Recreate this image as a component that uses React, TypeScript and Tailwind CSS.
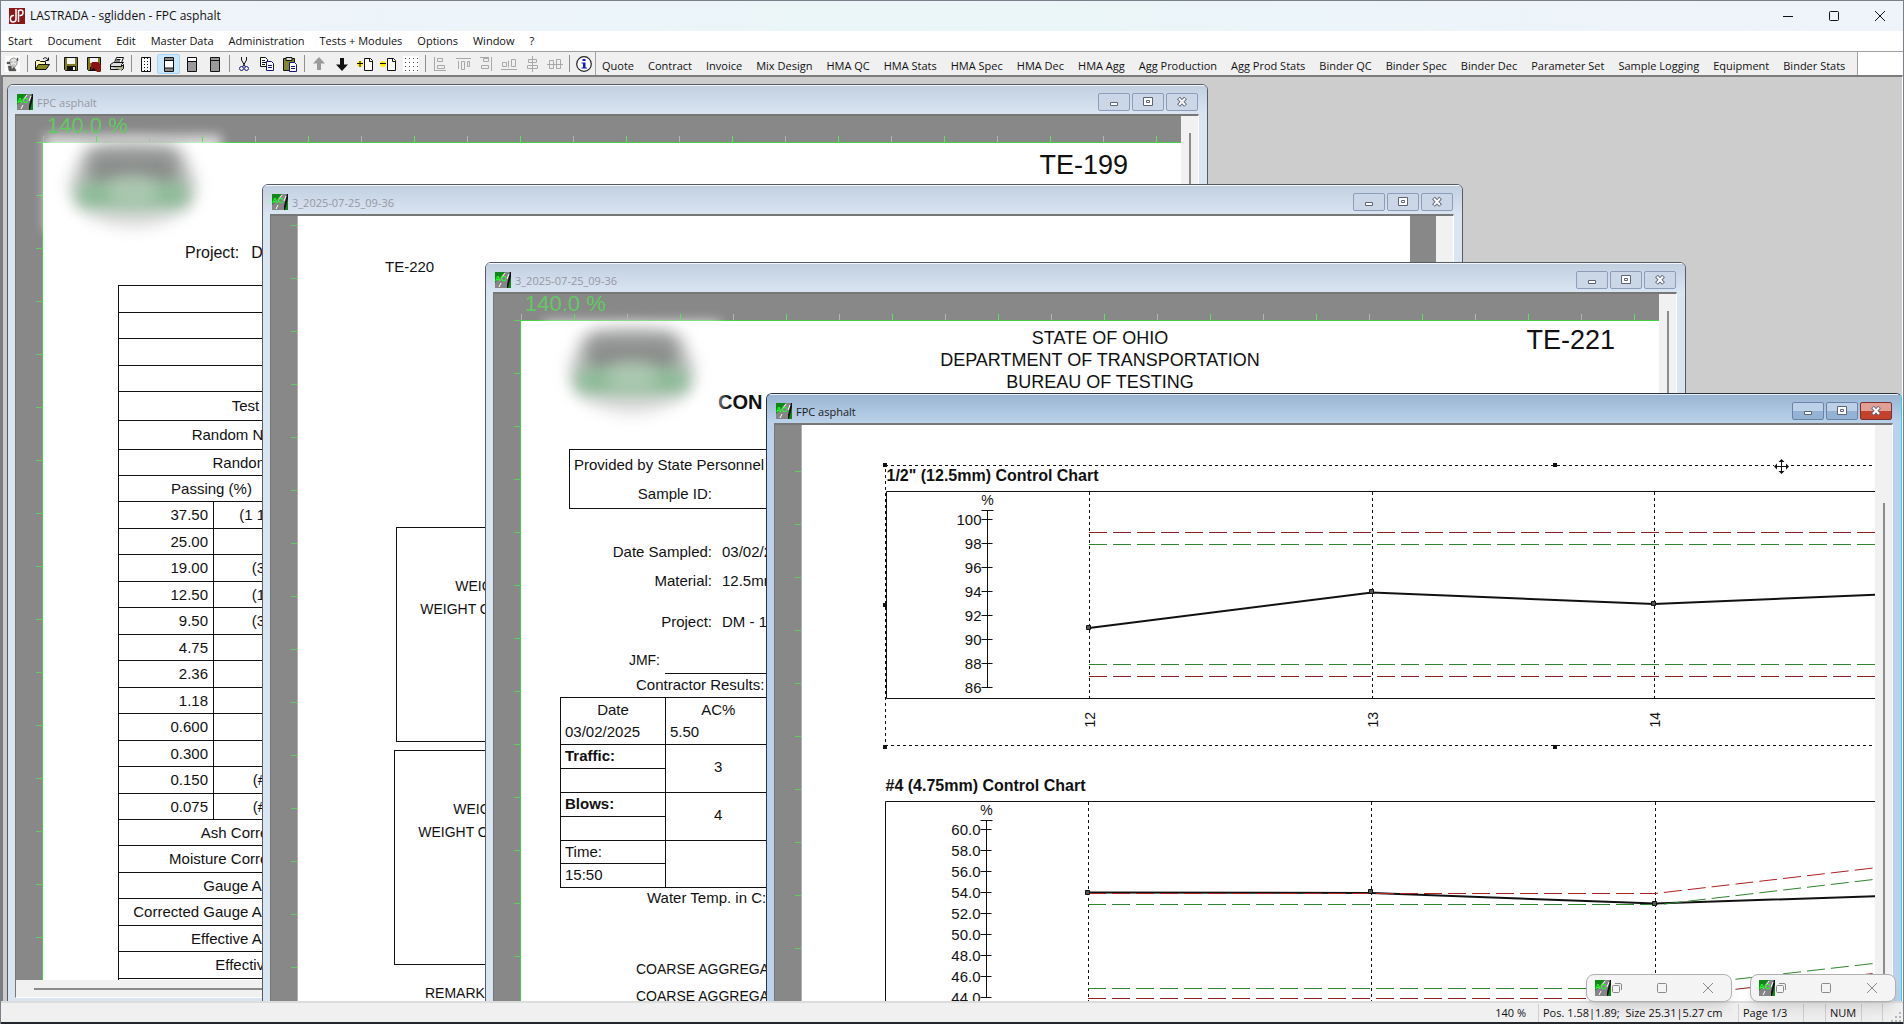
import * as React from "react";

interface WindowProps {
  title: string;
  place: string;
  active?: boolean;
  thumb?: string;
  hScroll?: boolean;
  children: React.ReactNode;
}
interface Series {
  color: string;
  points: string;
  dash?: string;
  width: number;
}
interface ChartProps {
  title: string;
  left: number;
  labels: string[];
  firstTick: number;
  step: number;
  boxBottom: number;
  columns: number[];
  names: string[];
  series: Series[];
  markers: number[][];
  selected?: boolean;
}

const menus = [
  "Start",
  "Document",
  "Edit",
  "Master Data",
  "Administration",
  "Tests + Modules",
  "Options",
  "Window",
  "?",
];
const modules = [
  "Quote",
  "Contract",
  "Invoice",
  "Mix Design",
  "HMA QC",
  "HMA Stats",
  "HMA Spec",
  "HMA Dec",
  "HMA Agg",
  "Agg Production",
  "Agg Prod Stats",
  "Binder QC",
  "Binder Spec",
  "Binder Dec",
  "Parameter Set",
  "Sample Logging",
  "Equipment",
  "Binder Stats",
];
const sieves = [
  ["37.50", '(1 1/2")'],
  ["25.00", ""],
  ["19.00", '(3/4")'],
  ["12.50", '(1/2")'],
  ["9.50", '(3/8")'],
  ["4.75", ""],
  ["2.36", ""],
  ["1.18", ""],
  ["0.600", ""],
  ["0.300", ""],
  ["0.150", "(#100)"],
  ["0.075", "(#200)"],
];
const results = [
  "Ash Correction",
  "Moisture Correction",
  "Gauge AC (%)",
  "Corrected Gauge AC (%)",
  "Effective AC (%)",
  "Effective (%)",
  "",
];

/* ---------- toolbar icons ---------- */

const pageShape = <path d="M3.5 1.5h9v14h-9z" fill="#fff" stroke="#111" />;

const icons: Record<string, React.ReactNode> = {
  User: (
    <>
      <path d="M0 0h15v16H0z" fill="#fff" />
      <path d="M5 4q4-4 7 0v4l-2 3H7L5 8z" fill="#e4e4e4" stroke="#999" />
      <path d="M2 6h3v2H2zM3 10h3l1 3 2-2 2 3v1H4zM6 6h2M9 6h2M7 9h3M12 2h1v3h-1z" fill="#555" stroke="#555" strokeWidth=".4" />
    </>
  ),
  Open: (
    <>
      <path d="M1.500 13.500v-8l1-1h3l1 1h5v3" fill="#fffbb0" stroke="#111" />
      <path d="M1.500 13.500l3-5h11l-3.500 5z" fill="#8a8a20" stroke="#111" />
      <path d="M9 3q3-3 5 1M14.500 1.500v3h-3" fill="none" stroke="#111" />
    </>
  ),
  Save: (
    <>
      <path d="M1.500 1.500h13v13h-12l-1-1z" fill="#7d7d20" stroke="#111" />
      <path d="M4 2h8v6H4z" fill="#f4f4f4" />
      <path d="M4 10h9v5H4z" fill="#111" />
      <path d="M10 11h2v3h-2z" fill="#eee" />
    </>
  ),
  "Save and close": (
    <>
      <path d="M1.500 1.500h13v13h-12l-1-1z" fill="#7d7d20" stroke="#111" />
      <path d="M4 2h8v5H4z" fill="#f4f4f4" />
      <path d="M4 11h9v4H4z" fill="#111" />
      <path d="M6 6h6l3 3v4h-2l2 3h-4L8 12l-3 2V9z" fill="#8f1212" />
    </>
  ),
  Print: (
    <>
      <path d="M5.500 6.500l2-5h7l-2 5" fill="#fff" stroke="#111" />
      <path d="M7.500 3.500h4M7 5h4" stroke="#111" />
      <path d="M1.500 8.500l3-2h10l-2 2v5h-11z" fill="#ddd" stroke="#111" />
      <path d="M1.500 10.500h11l2-2v4l-2 2" fill="#aaa" stroke="#111" />
      <path d="M9 12h2" stroke="#dd2" />
    </>
  ),
  "Page rulers": (
    <>
      {pageShape}
      <path d="M6.500 2v13M9.500 2v13" stroke="#111" strokeDasharray="1 2" />
    </>
  ),
  "Header and footer": (
    <>
      {pageShape}
      <path d="M4 2h8v2.500H4zM4 12h8v3H4z" fill="#888" />
      <path d="M3.500 4.500h9M3.500 12h9" stroke="#111" />
    </>
  ),
  Body: (
    <>
      {pageShape}
      <path d="M4 6h8v9H4z" fill="#999" />
      <path d="M3.500 5.500h9" stroke="#111" />
    </>
  ),
  "Full page": (
    <>
      {pageShape}
      <path d="M4 2h8v13H4z" fill="#999" />
      <path d="M3.500 4.500h9" stroke="#111" />
    </>
  ),
  Cut: (
    <>
      <path d="M5.500 1v3l4 7M10.500 1v3l-4 7" fill="none" stroke="#111" />
      <circle cx="5.500" cy="12.500" r="2" fill="none" stroke="#1a1a9a" />
      <circle cx="10.500" cy="12.500" r="2" fill="none" stroke="#1a1a9a" />
    </>
  ),
  Copy: (
    <>
      <path d="M1.500 1.500h5l2 2v7h-7z" fill="#fff" stroke="#111" />
      <path d="M3 4.500h3M3 6.500h4M3 8.500h3" stroke="#111" />
      <path d="M7.500 5.500h5l2 2v7h-7z" fill="#fff" stroke="#14147a" />
      <path d="M9 9.500h4M9 11.500h4" stroke="#14147a" />
    </>
  ),
  Paste: (
    <>
      <path d="M1.500 2.500h11v12h-11z" fill="#85852a" stroke="#111" />
      <path d="M4 1.500h6v3H4z" fill="#ddd" stroke="#111" />
      <path d="M7.500 6.500h5l2 2v7h-7z" fill="#fff" stroke="#14147a" />
      <path d="M9 10.500h4M9 12.500h4" stroke="#14147a" />
    </>
  ),
  "Move up": <path d="M8 1l6 6.500h-4V14H6V7.500H2z" fill="#9a9a9a" />,
  "Move down": <path d="M8 15l6-6.500h-4V2H6v6.500H2z" fill="#111" />,
  "Add page": (
    <>
      <circle cx="3" cy="8" r="3" fill="#ffee00" />
      <path d="M0 7.500h6M3 5v6" stroke="#111" />
      <path d="M7.500 2.500h6l2 2v10h-8z" fill="#fff" stroke="#111" />
      <path d="M12.500 2.500v3h3" fill="none" stroke="#111" />
    </>
  ),
  "Remove page": (
    <>
      <circle cx="3" cy="8" r="3" fill="#ffee00" />
      <path d="M0 7.500h6" stroke="#111" />
      <path d="M7.500 2.500h6l2 2v10h-8z" fill="#fff" stroke="#111" />
      <path d="M12.500 2.500v3h3" fill="none" stroke="#111" />
    </>
  ),
  Grid: (
    <>
      <path d="M0 0h16v16H0z" fill="#fff" />
      <path d="M2 2.500h13M2 6.500h13M2 10.500h13M2 14.500h13" stroke="#444" strokeDasharray="1 3" />
    </>
  ),
  "Align left": <path d="M2.500 1v14M5.500 2.500h5v3h-5zM5.500 9.500h7v3h-7zM3 14.500h11" fill="none" stroke="#a8a8a8" />,
  "Align top": <path d="M1 2.500h15M3.500 5v8M6.500 5.500h3v8h-3zM12.500 5.500h2v5h-2z" fill="none" stroke="#a8a8a8" />,
  "Align right": <path d="M13.500 1v14M5.500 2.500h5v3h-5zM3.500 9.500h7v3h-7zM2 1.500h9" fill="none" stroke="#a8a8a8" />,
  "Align bottom": <path d="M0 13.500h16M1.500 6.500h4v4h-4zM7.500 4.500v7M10.500 3.500h4v7h-4z" fill="none" stroke="#a8a8a8" />,
  "Center horizontally": <path d="M8.500 0v16M4.500 3.500h8v3h-8zM3.500 9.500h10v3h-10z" fill="none" stroke="#a8a8a8" />,
  "Center vertically": <path d="M0 8.500h16M2.500 4.500h4v8h-4zM9.500 3.500h4v9h-4z" fill="none" stroke="#a8a8a8" />,
  Info: (
    <>
      <circle cx="8" cy="8" r="7.300" fill="#fff" stroke="#222" strokeWidth="1.200" />
      <path d="M6.500 3h3v2h-3zM5.500 6.500h4v5h1.500v1h-5.500v-1h1.500v-4H5.500z" fill="#1616c8" />
    </>
  ),
};
const iconGroups = [
  ["User"],
  ["Open"],
  ["Save", "Save and close", "Print"],
  ["Page rulers", "Header and footer", "Body", "Full page"],
  ["Cut", "Copy", "Paste"],
  ["Move up", "Move down", "Add page", "Remove page", "Grid"],
  ["Align left", "Align top", "Align right", "Align bottom", "Center horizontally", "Center vertically"],
  ["Info"],
];

function AppLogo() {
  return (
    <svg width="16" height="16" viewBox="0 0 16 16">
      <path d="M0 0h16v16H0z" fill="#8c1618" />
      <path d="M7 1v10q0 3-3 3-3 0-2.500-4Q2 7 5 7.500M9.500 14V2.500q5-1.500 4.500 2.500-.5 3-3.500 2.500" fill="none" stroke="#fff" strokeWidth="1.500" />
    </svg>
  );
}

function RoadIcon() {
  return (
    <svg width="16" height="16" viewBox="0 0 16 16" className="shrink-0">
      <path d="M0 0h16v16H0z" fill="#0c8a14" />
      <path d="M0 16V11L10 0h5l-2 16z" fill="#858585" />
      <path d="M15 0l-3 12v4h1l3-12V0z" fill="#111" />
      <path d="M4 15l2-4M12 7l2-5M7 5l3-4" stroke="#fff" />
      <text x="0" y="9" fontSize="8" fontWeight="700" fontFamily="Liberation Sans, sans-serif" fill="#1dff1d">
        AC
      </text>
    </svg>
  );
}

/* ---------- window frame ---------- */

function CaptionButtons({ active }: { active?: boolean }) {
  const idle = "flex h-[18px] w-8 items-center justify-center rounded-[2px] border border-[#8c9cba] bg-[#cbd7e7]";
  const live = "flex h-[18px] w-8 items-center justify-center rounded-[2px] border border-[#6a84a8] bg-linear-to-b from-[#bcd0e8] from-50% to-[#94b2d4] to-50%";
  const close = "flex h-[18px] w-8 items-center justify-center rounded-[2px] border border-[#7a3030] bg-linear-to-b from-[#e2a095] from-50% to-[#c4412c] to-50%";
  return (
    <div className="flex gap-[2px]">
      <button aria-label="Minimize" className={active ? live : idle}>
        <svg width="12" height="12" viewBox="0 0 12 12">
          <path d="M2.500 6.500h7v3h-7z" fill="#fff" stroke="#5c6476" />
        </svg>
      </button>
      <button aria-label="Restore" className={active ? live : idle}>
        <svg width="12" height="12" viewBox="0 0 12 12">
          <path d="M1.500 1.500h9v8h-9zM4.500 4.500h3v2h-3z" fill="#fff" stroke="#5c6476" />
        </svg>
      </button>
      <button aria-label="Close" className={active ? close : idle}>
        <svg width="12" height="12" viewBox="0 0 12 12">
          <path d="M2.500 2l7 7.500M9.500 2l-7 7.500" stroke="#5c6476" strokeWidth="4" />
          <path d="M3 2.500l6 6.500M9 2.500L3 9" stroke="#fff" strokeWidth="2" />
        </svg>
      </button>
    </div>
  );
}

function DocWindow({ title, place, active, thumb, hScroll, children }: WindowProps) {
  const frame = active
    ? "border-[#2c3440] border-r-[#2ccdf0] bg-[#bbd2ea]"
    : "border-[#565c66] bg-[#dae5f2]";
  const caption = active
    ? "bg-linear-to-b from-[#9ab5d3] to-[#bbd2ea] text-[#1a1a1a]"
    : "bg-linear-to-b from-[#c2d0e0] to-[#dae5f2] text-[#9698a4]";
  return (
    <section className={`absolute flex flex-col overflow-hidden rounded-t-[6px] border pb-[7px] ${frame} ${place}`}>
      <header className={`flex h-[29px] shrink-0 items-center border-t border-white/70 pt-1 pr-[9px] pl-[9px] ${caption}`}>
        <RoadIcon />
        <h2 className="ml-[4px] flex-1 pt-[2px] text-[11px] leading-4">{title}</h2>
        <CaptionButtons active={active} />
      </header>
      <div className="mr-2 ml-[7px] flex min-h-0 flex-1 flex-col border border-t-2 border-[#777] border-r-white border-b-white">
        <div className="flex min-h-0 flex-1">
          <div className="flex min-w-0 flex-1 overflow-hidden bg-[#888] font-['Liberation_Sans',sans-serif] text-[15px] leading-[22px] whitespace-nowrap text-[#111]">
            {children}
          </div>
          <div className={`flex w-[17px] shrink-0 justify-center bg-[#f1f1f1] ${thumb ?? ""}`}>
            {thumb && <div className="w-[2px] bg-[#8b8b8b]" />}
          </div>
        </div>
        {hScroll && (
          <div className="flex h-[17px] shrink-0 items-center bg-[#f1f1f1] px-[18px]">
            <div className="h-[2px] flex-1 bg-[#8b8b8b]" />
          </div>
        )}
      </div>
    </section>
  );
}

const tickList = Array.from({ length: 24 }, (_, i) => i * 53);

function LeftRuler({ start, edge }: { start: number; edge: string }) {
  return (
    <svg className={`h-full w-[27px] shrink-0 border-r ${edge}`}>
      {tickList.map((t) => (
        <path key={t} d={`M20 ${start + t + 0.5}h6`} stroke="#5fce5f" />
      ))}
    </svg>
  );
}

/* a page with its zoom caption and the ruler along the top */
function RuledPage({ logo, children }: { logo: string; children: React.ReactNode }) {
  return (
    <div className="flex min-w-0 flex-1 flex-col">
      <div className="relative z-10 h-[26px] shrink-0 pl-[31px]">
        <p className="text-[22px] leading-5 text-[#62c862]">140.0 %</p>
        <svg className="absolute inset-x-0 bottom-0 h-[6px] w-full">
          {tickList.map((t, i) => (
            <path key={t} d={`M${t + 27.5} 0v6`} stroke={i % 2 ? "#5fe05f" : "#b4b4b4"} />
          ))}
        </svg>
      </div>
      <div className="flex min-h-0 flex-1">
        <LeftRuler start={0} edge="border-[#46cf46]" />
        <div className="relative min-w-0 flex-1 border-t border-[#46cf46] bg-white">
          <BlurredLogo place={logo} />
          {children}
        </div>
      </div>
    </div>
  );
}

function BlurredLogo({ place }: { place: string }) {
  return (
    <div className={`absolute h-24 w-44 ${place}`}>
      <div className="h-full w-full bg-white/70 blur-[6px]" />
      <div className="absolute inset-x-6 top-2 h-[84px] rounded-[50%] bg-[#d8d8d8] blur-[8px]" />
      <div className="absolute inset-x-10 top-3 h-11 rounded-t-xl bg-[#8d908e] blur-[9px]" />
      <div className="absolute inset-x-8 top-12 h-6 rounded-lg bg-[#8abb95] blur-[8px]" />
      <div className="absolute inset-x-16 top-10 h-8 rounded-full bg-[#b9cfbd]/60 blur-[7px]" />
    </div>
  );
}

/* ---------- documents ---------- */

function GaugeReport() {
  const cell = "border border-[#111] p-0";
  return (
    <>
      <p className="pt-[6px] pr-[53px] text-right text-[27px] leading-8">TE-199</p>
      <p className="mt-[61px] flex gap-3 pl-[142px] text-[16px]">
        <span>Project:</span>
        <span>DM - 1</span>
      </p>
      <table className="mt-[21px] ml-[75px] w-[600px] table-fixed border-collapse">
        <colgroup>
          <col className="w-[95px]" />
          <col className="w-[87px]" />
          <col />
        </colgroup>
        <tbody>
          {["h-[27px]", "h-[26px]", "h-[27px]", "h-[26px]"].map((h, i) => (
            <tr key={i} className={h}>
              <td colSpan={2} className={cell} />
              <td className={cell} />
            </tr>
          ))}
          <tr className="h-[29px]">
            <td colSpan={2} className={`${cell} text-right`}>Test Time:</td>
            <td className={cell} />
          </tr>
          <tr className="h-[29px]">
            <td colSpan={2} className={`${cell} text-right`}>Random No. (X)</td>
            <td className={cell} />
          </tr>
          <tr className="h-[26px]">
            <td colSpan={2} className={`${cell} text-right`}>Random Unit</td>
            <td className={cell} />
          </tr>
          <tr className="h-[26px]">
            <td colSpan={2} className={`${cell} pl-1 text-center`}>Passing (%)</td>
            <td className={cell} />
          </tr>
          {sieves.map(([size, inch], i) => (
            <tr key={size} className={i % 2 ? "h-[26px]" : "h-[27px]"}>
              <td className={`${cell} pr-[5px] text-right`}>{size}</td>
              <td className={inch.startsWith("(#") ? `${cell} pr-1 text-right` : `${cell} pr-3 text-right`}>{inch}</td>
              <td className={cell} />
            </tr>
          ))}
          {results.map((name, i) => (
            <tr key={i} className={i % 2 ? "h-[27px]" : "h-[26px]"}>
              <td colSpan={2} className={`${cell} text-right`}>{name}</td>
              <td className={cell} />
            </tr>
          ))}
        </tbody>
      </table>
    </>
  );
}

function WeightSheet() {
  return (
    <div className="w-[1112px] shrink-0 bg-white pt-10 text-[14px]">
      <p className="pl-[87px] text-[15px]">TE-220</p>
      <div className="mt-[249px] ml-[98px] h-[215px] w-[900px] border border-[#111] pt-[47px] leading-[23px]">
        <p className="w-[163px] text-right">WEIGHT AFTER</p>
        <p className="w-[163px] text-right">WEIGHT OF SAMPLE</p>
      </div>
      <div className="mt-2 ml-24 h-[215px] w-[900px] border border-[#111] pt-[47px] leading-[23px]">
        <p className="w-[163px] text-right">WEIGHT AFTER</p>
        <p className="w-[163px] text-right">WEIGHT OF SAMPLE</p>
      </div>
      <p className="mt-[17px] pl-[127px]">REMARKS:</p>
    </div>
  );
}

function Field({ label, value, gap }: { label: string; value: string; gap: string }) {
  return (
    <p className={`flex gap-[10px] ${gap}`}>
      <span className="w-[191px] text-right">{label}</span>
      <span>{value}</span>
    </p>
  );
}

function ContractorReport() {
  const cell = "border border-[#111] px-1 py-0 leading-[22px]";
  return (
    <>
      <div className="flex pt-[6px]">
        <div className="w-[200px]" />
        <div className="flex-1 text-center text-[18px]">
          <p>STATE OF OHIO</p>
          <p>DEPARTMENT OF TRANSPORTATION</p>
          <p>BUREAU OF TESTING</p>
        </div>
        <p className="w-[180px] pr-[44px] text-right text-[27px] leading-[26px]">TE-221</p>
      </div>
      <h3 className="pl-[197px] text-[20px] leading-[18px] font-bold">CON</h3>
      <div className="mt-[38px] ml-12 w-[600px] border border-[#111] pl-1 leading-[29px]">
        <p>Provided by State Personnel</p>
        <p className="w-[138px] text-right">Sample ID:</p>
      </div>
      <Field label="Date Sampled:" value="03/02/2025" gap="mt-[32px]" />
      <Field label="Material:" value="12.5mm" gap="mt-[7px]" />
      <Field label="Project:" value="DM - 1" gap="mt-[19px]" />
      <div className="mt-4 flex h-[25px] gap-[5px]">
        <span className="w-[139px] text-right text-[14px]">JMF:</span>
        <span className="flex-1 border-b border-[#111]" />
      </div>
      <p className="pl-[115px]">Contractor Results:</p>
      <table className="mt-[1px] ml-[39px] w-[317px] table-fixed border-collapse">
        <colgroup>
          <col className="w-[105px]" />
          <col className="w-[105px]" />
          <col />
        </colgroup>
        <tbody>
          <tr className="h-[47px]">
            <td className={cell}>
              <div className="text-center">Date</div>
              <div>03/02/2025</div>
            </td>
            <td className={`${cell} border-r-0`}>
              <div className="text-center">AC%</div>
              <div>5.50</div>
            </td>
            <td className={`${cell} border-l-0`} />
          </tr>
          <tr className="h-6">
            <td className={`${cell} align-top font-bold`}>Traffic:</td>
            <td rowSpan={2} className={`${cell} border-r-0 pb-1 text-center`}>3</td>
            <td rowSpan={2} className={`${cell} border-l-0`} />
          </tr>
          <tr className="h-6">
            <td className={cell} />
          </tr>
          <tr className="h-6">
            <td className={`${cell} align-top font-bold`}>Blows:</td>
            <td rowSpan={2} className={`${cell} border-r-0 pb-1 text-center`}>4</td>
            <td rowSpan={2} className={`${cell} border-l-0`} />
          </tr>
          <tr className="h-6">
            <td className={cell} />
          </tr>
          <tr className="h-[23px]">
            <td className={`${cell} align-top`}>Time:</td>
            <td rowSpan={2} className={`${cell} border-r-0`} />
            <td rowSpan={2} className={`${cell} border-l-0`} />
          </tr>
          <tr className="h-6">
            <td className={`${cell} align-top`}>15:50</td>
          </tr>
        </tbody>
      </table>
      <p className="pl-[126px] leading-5">Water Temp. in C:</p>
      <div className="mt-12 pl-[115px] text-[14px] leading-[27px]">
        <p>COARSE AGGREGATE</p>
        <p>COARSE AGGREGATE</p>
      </div>
    </>
  );
}

function Chart({ title, left, labels, firstTick, step, boxBottom, columns, names, series, markers, selected }: ChartProps) {
  const axis = left + 101;
  const last = firstTick + step * (labels.length - 1);
  return (
    <svg className="block h-[300px] w-full" fontSize="15" fill="#111">
      <text x={left} y="22" fontSize="16" fontWeight="700">
        {title}
      </text>
      <path d={`M1400 ${32.5}H${left}V${boxBottom}H1400`} fill="none" stroke="#111" />
      <text x={axis} y="46" textAnchor="middle" fontSize="14">
        %
      </text>
      <path d={`M${axis} ${firstTick - 9}V${last}M${axis - 6} ${firstTick - 9}h12`} stroke="#111" />
      {labels.map((label, i) => (
        <g key={label}>
          <path d={`M${axis - 6} ${firstTick + i * step}h11`} stroke="#111" />
          <text x={axis - 6} y={firstTick + i * step + 5} textAnchor="end">
            {label}
          </text>
        </g>
      ))}
      {columns.map((x, i) => (
        <g key={x}>
          <path d={`M${x} 33V${boxBottom}`} stroke="#111" strokeDasharray="3 3" />
          {names[i] && (
            <text transform={`translate(${x + 5} ${boxBottom + 29}) rotate(-90)`} fontSize="14">
              {names[i]}
            </text>
          )}
        </g>
      ))}
      {series.map((s, i) => (
        <polyline key={i} points={s.points} fill="none" stroke={s.color} strokeWidth={s.width} strokeDasharray={s.dash} />
      ))}
      {markers.map(([x, y]) => (
        <path key={x} d={`M${x - 2} ${y - 2}h4v4h-4z`} fill="#555" stroke="#111" />
      ))}
      {selected && (
        <>
          <path d="M990 6.500H3.500V286.500H990" fill="none" stroke="#111" strokeDasharray="3 3" />
          <path d="M1 4h4v4H1zM1 144h4v4H1zM1 286h4v4H1zM671 4h4v4h-4zM671 286h4v4h-4z" />
          <path d="M899.500 0v15M892 7.500h15" stroke="#fff" strokeWidth="4" />
          <path d="M899.500 1v13M893 7.500h13" stroke="#111" />
          <path d="M899.500 0l3 3h-6zM899.500 15l3-3h-6zM892 7.500l3-3v6zM907 7.500l-3-3v6z" />
        </>
      )}
    </svg>
  );
}

const red = "#8f2323";
const green = "#2f842f";

function ControlCharts() {
  return (
    <div className="min-w-0 flex-1 bg-white pt-[34px] pl-[80px]">
      <Chart
        selected
        title={'1/2" (12.5mm) Control Chart'}
        left={4.5}
        labels={["100", "98", "96", "94", "92", "90", "88", "86"]}
        firstTick={60.5}
        step={24}
        boxBottom={239.5}
        columns={[207.5, 490.5, 772.5]}
        names={["12", "13", "14"]}
        series={[
          { color: red, points: "207,73.5 1000,73.5", dash: "18 6", width: 1 },
          { color: green, points: "207,85.5 1000,85.5", dash: "18 6", width: 1 },
          { color: green, points: "207,205.5 1000,205.5", dash: "18 6", width: 1 },
          { color: red, points: "207,217.5 1000,217.5", dash: "18 6", width: 1 },
          { color: "#111", points: "207,169 490,133.5 772,145 1000,135.5", width: 2 },
        ]}
        markers={[
          [206.5, 168.5],
          [489.5, 132.5],
          [771.5, 144.5],
        ]}
      />
      <div className="mt-[10px]">
        <Chart
          title="#4 (4.75mm) Control Chart"
          left={3.5}
          labels={["60.0", "58.0", "56.0", "54.0", "52.0", "50.0", "48.0", "46.0", "44.0"]}
          firstTick={60.5}
          step={21}
          boxBottom={290.5}
          columns={[206.5, 489.5, 773.5]}
          names={[]}
          series={[
            { color: "#111", points: "206,123.5 490,124 773,134.5 1000,127", width: 2 },
            { color: "#b02020", points: "206,124.5 773,124.5 1000,98", dash: "18 6", width: 1 },
            { color: green, points: "206,135.5 778,135.5 1000,109.5", dash: "18 6", width: 1 },
            { color: green, points: "206,219.5 773,219.5 1000,193.5", dash: "18 6", width: 1 },
            { color: red, points: "206,229.5 773,229.5 1000,203.5", dash: "18 6", width: 1 },
          ]}
          markers={[
            [205.5, 123.5],
            [488.5, 122.5],
            [772.5, 134.5],
          ]}
        />
      </div>
    </div>
  );
}

function MinimizedWindow() {
  return (
    <div className="flex h-7 w-[146px] items-center rounded-lg border border-[#b0b0b0] bg-[#f4f4f4] pl-2 text-[#8a8a8a] shadow-lg">
      <RoadIcon />
      <button aria-label="Restore">
        <svg width="12" height="12" viewBox="0 0 12 12" fill="none" stroke="currentColor">
          <path d="M1.500 4.500a1 1 0 011-1h5a1 1 0 011 1v5a1 1 0 01-1 1h-5a1 1 0 01-1-1zM4 1.500h5q1.500 0 1.500 1.500v5" />
        </svg>
      </button>
      <button aria-label="Maximize" className="ml-[33px]">
        <svg width="12" height="12" viewBox="0 0 12 12" fill="none" stroke="currentColor">
          <rect x="1.500" y="1.500" width="9" height="9" rx="1" />
        </svg>
      </button>
      <button aria-label="Close" className="ml-[34px]">
        <svg width="12" height="12" viewBox="0 0 12 12" stroke="currentColor">
          <path d="M1 1l10 10M11 1L1 11" />
        </svg>
      </button>
    </div>
  );
}

function App() {
  const control = "flex w-[46px] items-center justify-center";
  const pane = "border-r border-[#d0d0d0] px-1 leading-[18px]";
  return (
    <div className="relative flex h-screen flex-col overflow-hidden border-x border-t border-[#7a7f8a] bg-[#f0f0f0] font-['Open_Sans','Noto_Sans',sans-serif] text-[11px] text-[#111]">
      <div className="flex h-[30px] shrink-0 bg-linear-to-r from-[#eff3fa] via-[#eaf6f8] to-[#eff3fa]">
        <div className="flex flex-1 items-center gap-[5px] pl-2">
          <AppLogo />
          <h1 className="text-[12px] leading-4">LASTRADA - sglidden - FPC asphalt</h1>
        </div>
        <button aria-label="Minimize" className={control}>
          <svg width="12" height="12" stroke="#111">
            <path d="M1 6.500h10" />
          </svg>
        </button>
        <button aria-label="Maximize" className={control}>
          <svg width="12" height="12" fill="none" stroke="#111">
            <rect x="1.500" y="1.500" width="9" height="9" rx="1" />
          </svg>
        </button>
        <button aria-label="Close" className={control}>
          <svg width="12" height="12" stroke="#111">
            <path d="M1 1l10 10M11 1L1 11" />
          </svg>
        </button>
      </div>

      <nav className="flex h-5 shrink-0 items-center gap-[15px] bg-white pl-[7px] leading-4">
        {menus.map((name) => (
          <button key={name}>{name}</button>
        ))}
      </nav>

      <div className="flex h-6 shrink-0 border-t border-[#a0a0a0] bg-white">
        <div className="flex items-center bg-[#f0f0f0]">
          {iconGroups.map((group, g) => (
            <React.Fragment key={g}>
              {g > 0 && (
                <span className="flex w-[6px] justify-center">
                  <span className="h-[17px] w-px bg-[#909090]" />
                </span>
              )}
              {group.map((name) => (
                <button
                  key={name}
                  aria-label={name}
                  className={
                    name === "Header and footer"
                      ? "flex h-5 w-[23px] items-center justify-center rounded-[2px] border border-[#a8d4f4] bg-[#cce6fa]"
                      : "flex h-5 w-[23px] items-center justify-center"
                  }
                >
                  <svg width="16" height="16" viewBox="0 0 16 16" className="shrink-0">
                    {icons[name]}
                  </svg>
                </button>
              ))}
            </React.Fragment>
          ))}
        </div>
        <div className="flex gap-[14px] border-x border-[#a0a0a0] bg-[#f0f0f0] pt-[5px] pr-3 pl-[6px] leading-4 whitespace-nowrap">
          {modules.map((name) => (
            <button key={name}>{name}</button>
          ))}
        </div>
      </div>

      <main className="relative min-h-0 flex-1 overflow-hidden border-t-2 border-r border-l-2 border-[#7c7c7c] border-r-white bg-[#cdcdcd]">
        <DocWindow title="FPC asphalt" place="top-[7px] bottom-[-5px] left-[4px] w-[1201px]" thumb="pt-[17px]" hScroll>
          <RuledPage logo="top-[-8px] left-[2px]">
            <GaugeReport />
          </RuledPage>
        </DocWindow>
        <DocWindow title="3_2025-07-25_09-36" place="top-[107px] bottom-[-24px] left-[259px] w-[1201px]">
          <LeftRuler start={9} edge="border-[#b0b0b0]" />
          <WeightSheet />
        </DocWindow>
        <DocWindow title="3_2025-07-25_09-36" place="top-[185px] bottom-[-24px] left-[482px] w-[1201px]" thumb="pt-[17px]">
          <RuledPage logo="top-0 left-[23px]">
            <ContractorReport />
          </RuledPage>
        </DocWindow>
        <DocWindow active title="FPC asphalt" place="top-[316px] right-0 bottom-[-24px] left-[763px]" thumb="pt-[78px]">
          <LeftRuler start={46} edge="border-[#b0b0b0]" />
          <ControlCharts />
        </DocWindow>
      </main>

      <footer className="flex h-[21px] shrink-0 items-center justify-end border-t-2 border-[#dcdcdc] pr-[2px] whitespace-pre">
        <span className={`${pane} pr-3`}>140 %</span>
        <span className={`${pane} w-[200px]`}>Pos. 1.58|1.89;  Size 25.31|5.27 cm</span>
        <span className={`${pane} w-[65px]`}>Page 1/3</span>
        <span className={`${pane} h-[18px] w-[22px]`} />
        <span className={`${pane} w-[36px]`}>NUM</span>
        <span className={`${pane} h-[18px] w-[21px]`} />
        <svg width="18" height="12" className="self-end">
          <path d="M16 2h2v2h-2zM16 6h2v2h-2zM12 6h2v2h-2zM16 10h2v2h-2zM12 10h2v2h-2zM8 10h2v2H8z" fill="#b8b8b8" />
        </svg>
      </footer>
      <div className="h-[2px] shrink-0 bg-[#23272c]" />

      <div className="absolute right-[7px] bottom-[22px] flex gap-[18px]">
        <MinimizedWindow />
        <MinimizedWindow />
      </div>
    </div>
  );
}

export default App;
